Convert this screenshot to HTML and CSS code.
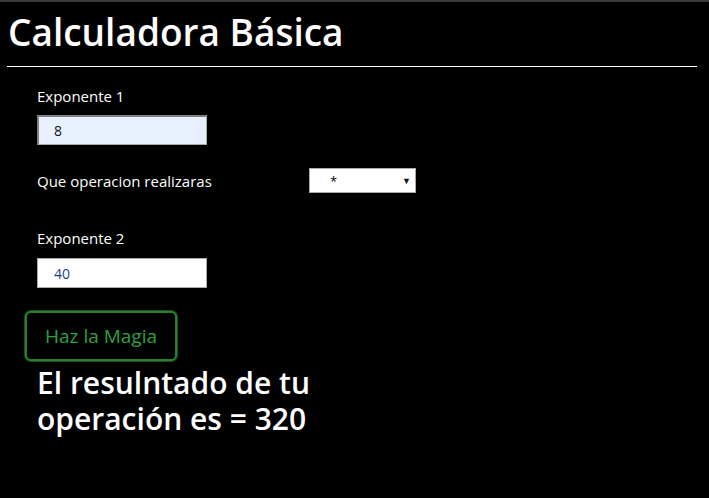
FILE: index.html
```html
<!DOCTYPE html>
<html lang="es">
<head>
<meta charset="utf-8">
<title>Calculadora Básica</title>
<link rel="stylesheet" href="styles.css">
</head>
<body>
<div class="topbar"></div>
<header class="header">
  <h1 class="title">Calculadora Básica</h1>
</header>
<main class="form">
  <label class="label">Exponente 1</label>
  <input class="field field-filled" type="text" value="8">
  <div class="op-row">
    <label class="label op-label">Que operacion realizaras</label>
    <div class="select"><span class="select-value">*</span><span class="select-arrow">▼</span></div>
  </div>
  <label class="label label-2">Exponente 2</label>
  <input class="field field-2" type="text" value="40">
  <button class="btn" type="button">Haz la Magia</button>
  <h2 class="result">El resulntado de tu operación es = 320</h2>
</main>
</body>
</html>
```
FILE: styles.css
```css
html, body {
  margin: 0;
  padding: 0;
  background: #000;
  color: #fff;
  font-family: "Open Sans", "Noto Sans", sans-serif;
}
.topbar {
  height: 2px;
  background: #3a3d41;
}
.header {
  margin: 0 12px 0 7px;
  border-bottom: 1px solid #fff;
  padding: 6px 0 10px 1px;
}
.title {
  margin: 0;
  font-size: 37px;
  font-weight: 600;
  line-height: 48px;
  letter-spacing: 0;
}
.form {
  display: flex;
  flex-direction: column;
  align-items: flex-start;
  padding: 19px 0 0 37px;
}
.label {
  font-size: 15px;
  line-height: 20px;
}
.field {
  box-sizing: border-box;
  width: 170px;
  height: 30px;
  margin-top: 9px;
  padding: 0 0 0 16px;
  font-family: inherit;
  font-size: 14px;
  color: #1c3f8c;
  background: #fff;
  border: 1px solid #a9a9a9;
  outline: none;
}
.field-filled {
  background: #e8f0fe;
  color: #111;
  border-top: 2px solid #808080;
  border-left: 2px solid #808080;
  padding-left: 15px;
}
.op-row {
  display: flex;
  align-items: center;
  margin-top: 23px;
}
.op-label {
  width: 272px;
}
.select {
  box-sizing: border-box;
  width: 107px;
  height: 25px;
  background: #fff;
  border: 1px solid #a9a9a9;
  display: flex;
  align-items: center;
  justify-content: space-between;
  padding: 0 4px 0 20px;
  color: #000;
}
.select-value {
  font-size: 13px;
}
.select-arrow {
  font-size: 9px;
  color: #111;
}
.label-2 {
  margin-top: 35px;
}
.field-2 {
  margin-top: 10px;
}
.btn {
  margin: 23px 0 0 -12px;
  box-sizing: border-box;
  width: 152px;
  height: 50px;
  background: #000;
  border: 2px solid #2b7d33;
  box-shadow: 0 0 0 1px #1a5121;
  border-radius: 6px;
  color: #2ea043;
  font-family: inherit;
  font-size: 19px;
  padding: 0;
}
.result {
  margin: 4px 0 0;
  width: 300px;
  font-size: 30px;
  font-weight: 600;
  line-height: 36px;
}
```
